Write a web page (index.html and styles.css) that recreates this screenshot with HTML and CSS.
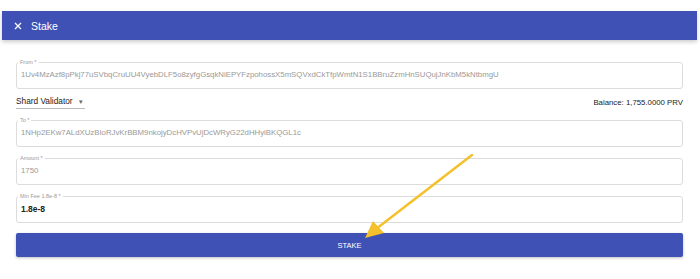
FILE: index.html
```html
<!DOCTYPE html>
<html lang="en">
<head>
    <meta charset="UTF-8">
    <meta name="viewport" content="width=device-width, initial-scale=1.0">
    <title>Stake</title>
    <link rel="stylesheet" href="styles.css">
</head>
<body>

    <header class="appbar">
        <span class="close">
            <svg width="8" height="8" viewBox="0 0 8 8"><path d="M1 1L7 7M7 1L1 7" stroke="#fff" stroke-width="1.3"/></svg>
        </span>
        <span class="title">Stake</span>
    </header>

    <section class="form">
        <fieldset class="field">
            <legend>From *</legend>
            <div class="value muted">1Uv4MzAzf8pPkj77uSVbqCruUU4VyebDLF5o8zyfgGsqkNiEPYFzpohossX5mSQVxdCkTfpWmtN1S1BBruZzmHnSUQujJnKbM5kNtbmgU</div>
        </fieldset>

        <div class="row">
            <div class="select">Shard Validator <span class="caret">&#9662;</span></div>
            <div class="balance">Balance: 1,755.0000 PRV</div>
        </div>

        <fieldset class="field">
            <legend>To *</legend>
            <div class="value muted">1NHp2EKw7ALdXUzBIoRJvKrBBM9nkojyDcHVPvUjDcWRyG22dHHyiBKQGL1c</div>
        </fieldset>

        <fieldset class="field">
            <legend>Amount *</legend>
            <div class="value muted">1750</div>
        </fieldset>

        <fieldset class="field">
            <legend>Min Fee 1.8e-8 *</legend>
            <div class="value dark">1.8e-8</div>
        </fieldset>

        <button class="stake">STAKE</button>
    </section>

    <!-- annotation arrow drawn over the form -->
    <svg class="arrow" width="700" height="279" viewBox="0 0 700 279">
        <line x1="472" y1="155" x2="376" y2="229" stroke="#f4c02c" stroke-width="2.5" stroke-linecap="round"/>
        <polygon points="365,238 373,221 384,233" fill="#f4c02c"/>
    </svg>

</body>
</html>
```

FILE: styles.css
```css
/* Basic Styling */
body {
    font-family: "Liberation Sans", Arial, sans-serif;
    margin: 0;
    padding: 0;
    background-color: #fff;
    width: 700px;
    height: 279px;
    overflow: hidden;
    position: relative;
}

.appbar {
    margin: 11px 3px 0 2px;
    height: 29px;
    background-color: #3f51b5;
    color: white;
    display: flex;
    align-items: center;
    box-shadow: 0 2px 4px rgba(0, 0, 0, 0.2);
}

.close {
    display: flex;
    margin-left: 12px;
    margin-right: 9px;
}

.title {
    font-size: 10.5px;
}

.form {
    padding: 19px 17px 0 16px;
}

.field {
    box-sizing: border-box;
    margin: 0 0 8px 0;
    padding: 0 7px 0 4px;
    height: 30px;
    border: 1px solid #dcdcdc;
    border-radius: 3px;
}

.field legend {
    font-size: 5.5px;
    line-height: 6px;
    color: #999;
    padding: 0 2px;
    margin-left: -3px;
}

.value {
    font-size: 7.8px;
    line-height: 14px;
    margin-top: 3px;
    white-space: nowrap;
    overflow: hidden;
}

.muted {
    color: #999;
}

.dark {
    color: #222;
    font-weight: bold;
    font-size: 8.5px;
}

.row {
    display: flex;
    justify-content: space-between;
    align-items: center;
    margin: -4px 0 5px 0;
    height: 19px;
}

.select {
    font-size: 8.3px;
    color: #222;
    width: 69px;
    border-bottom: 1px solid #bbb;
    padding-bottom: 2px;
}

.caret {
    font-size: 7px;
    color: #666;
    margin-left: 4px;
}

.balance {
    font-size: 7.8px;
    color: #222;
}

.stake {
    display: block;
    width: 100%;
    height: 24px;
    margin-top: 10px;
    background-color: #3f51b5;
    color: white;
    border: none;
    border-radius: 2px;
    font-family: "Liberation Sans", Arial, sans-serif;
    font-size: 7.5px;
    box-shadow: 0 1px 3px rgba(0, 0, 0, 0.25);
}

.arrow {
    position: absolute;
    left: 0;
    top: 0;
    pointer-events: none;
}
```
